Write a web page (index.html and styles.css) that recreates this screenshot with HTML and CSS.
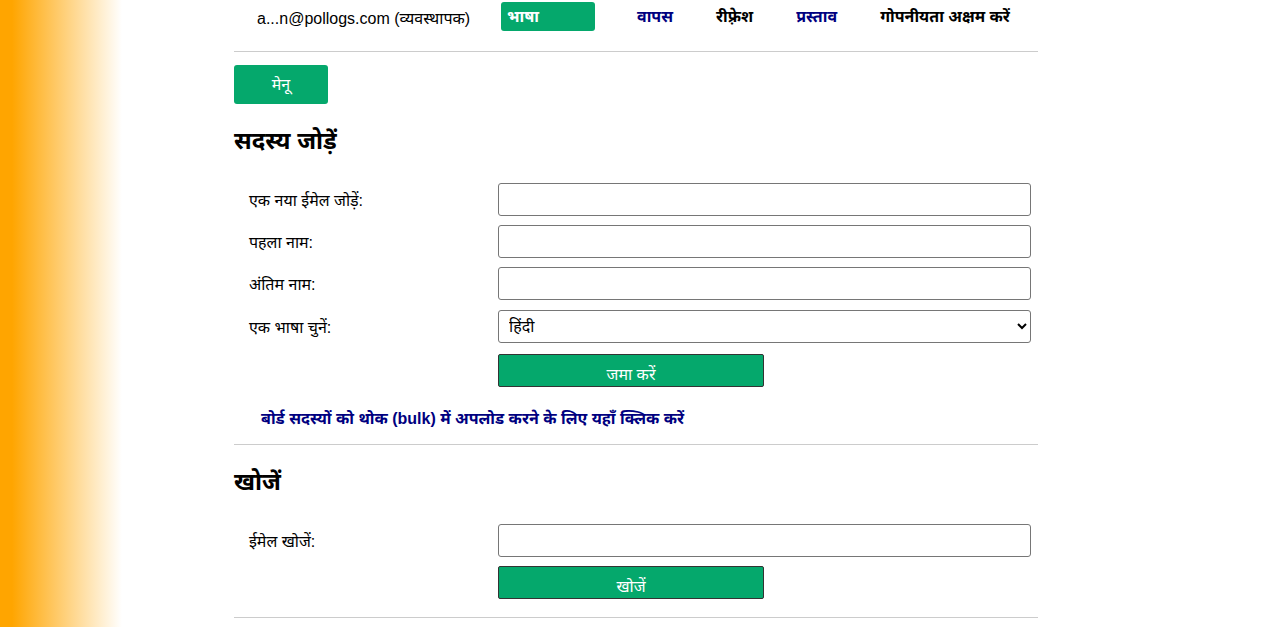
FILE: index.html
```html
<!DOCTYPE html>
<html lang="hi">
<head>
    <meta charset="UTF-8">
    <title>सदस्य जोड़ें</title>
    <link rel="stylesheet" href="styles.css">
</head>
<body>
<div id="page">
    <div class="top">
        <span class="user">a...n@pollogs.com (व्यवस्थापक)</span>
        <ul class="links">
            <li class="lang">भाषा</li>
            <li class="blue">वापस</li>
            <li>रीफ़्रेश</li>
            <li class="blue">प्रस्ताव</li>
            <li>गोपनीयता अक्षम करें</li>
        </ul>
    </div>
    <hr>
    <button class="menu">मेनू</button>
    <h2>सदस्य जोड़ें</h2>
    <form class="rows">
        <label>एक नया ईमेल जोड़ें:</label>
        <input type="text">
        <label>पहला नाम:</label>
        <input type="text">
        <label>अंतिम नाम:</label>
        <input type="text">
        <label>एक भाषा चुनें:</label>
        <select><option>हिंदी</option></select>
        <span></span>
        <button type="button" class="send">जमा करें</button>
    </form>
    <a class="bulk" href="#">बोर्ड सदस्यों को थोक (bulk) में अपलोड करने के लिए यहाँ क्लिक करें</a>
    <hr>
    <h2>खोजें</h2>
    <form class="rows last">
        <label>ईमेल खोजें:</label>
        <input type="text">
        <span></span>
        <button type="button" class="send">खोजें</button>
    </form>
    <hr>
</div>
</body>
</html>
```

FILE: styles.css
```css
*{
    margin: 0px;
    padding: 0px;
    box-sizing: border-box;
}
body{
    background: linear-gradient(to right, #ffa500 12px, #ffffff 122px) no-repeat;
    min-height: 627px;
    font-family: "Liberation Sans", "Noto Sans", sans-serif;
    font-size: 16px;
    color: #000;
}
#page{
    width: 805px;
    margin: 0 auto;
    padding-left: 1px;
}
hr{
    border: none;
    border-top: 1px solid #cccccc;
}
.top{
    height: 51px;
    display: flex;
    align-items: flex-start;
    padding-top: 2px;
}
.user{
    margin-left: 23px;
    margin-top: 5px;
    width: 244px;
    flex-shrink: 0;
    white-space: nowrap;
}
.links{
    display: flex;
    list-style: none;
}
.links li{
    font-weight: bold;
    margin-right: 43px;
    line-height: 29px;
    height: 29px;
    flex-shrink: 0;
    white-space: nowrap;
}
.links li.blue{
    color: #000080;
}
.links li.lang{
    background: #05a86c;
    color: #fff;
    width: 94px;
    padding-left: 6px;
    border-radius: 3px;
    margin-right: 42px;
}
.menu{
    margin-top: 13px;
    width: 94px;
    height: 39px;
    background: #05a86c;
    color: #fff;
    border: none;
    border-radius: 3px;
    font-size: 16px;
    font-family: inherit;
    padding-bottom: 2px;
}
h2{
    font-size: 24px;
    margin-top: 22px;
    margin-bottom: 27px;
    line-height: 30px;
}
.rows{
    display: grid;
    grid-template-columns: 264px 533px;
    row-gap: 9px;
    align-items: center;
}
.rows.last{
    margin-bottom: 18px;
}
.rows label{
    padding-left: 15px;
}
.rows input, .rows select{
    height: 33px;
    border: 1px solid #767676;
    border-radius: 3px;
    font-size: 16px;
    font-family: inherit;
    background: #fff;
}
.rows select{
    padding-left: 6px;
    margin-top: 1px;
    margin-bottom: 2px;
}
.rows .send{
    width: 266px;
    height: 33px;
    background: #05a86c;
    color: #fff;
    border: 1px solid #333;
    border-radius: 2px;
    font-size: 16px;
    font-family: inherit;
    padding-top: 6px;
}
.bulk{
    display: block;
    margin: 20px 0 15px 27px;
    color: #000080;
    font-weight: bold;
    text-decoration: none;
}
```
